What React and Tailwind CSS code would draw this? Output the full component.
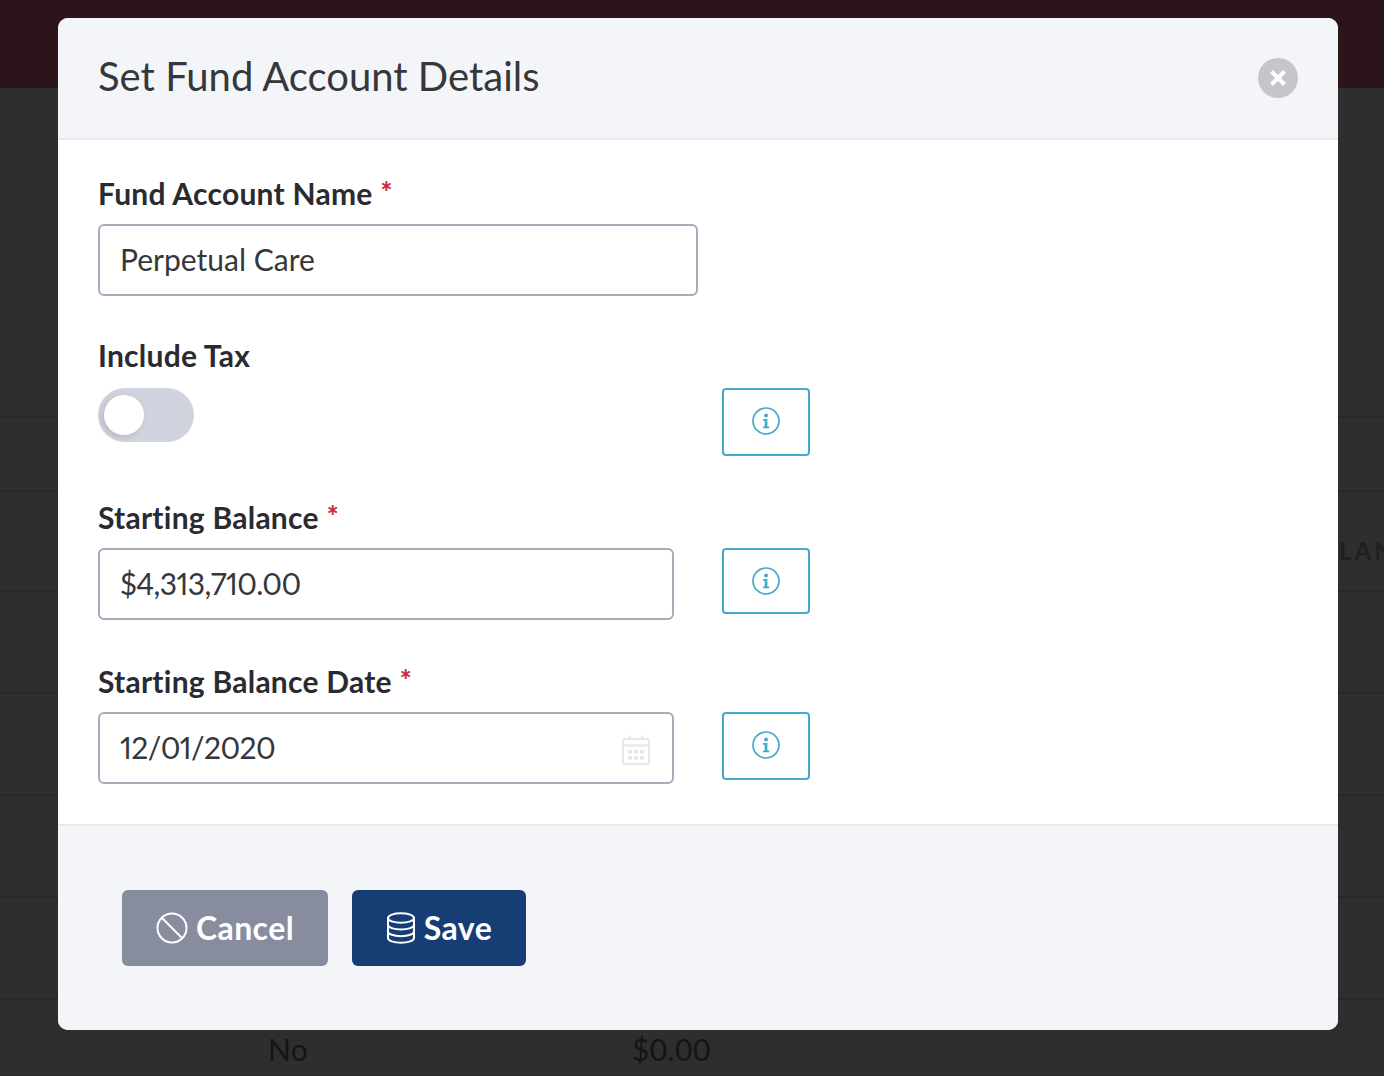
import { useState } from 'react';

const font = { fontFamily: 'Lato, sans-serif', fontVariantLigatures: 'none' };

// table rows behind the overlay, heights read off the screenshot
const backRows = ['h-[330px]', 'h-[74px]', 'h-[100px]', 'h-[102px]', 'h-[102px]', 'h-[102px]', 'h-[102px]'];

const InfoIcon = () => (
  <svg width="28" height="28" viewBox="0 0 28 28" fill="none" className="text-[#45a9c9]">
    <circle cx="14" cy="14" r="13" stroke="currentColor" strokeWidth="1.7" />
    <circle cx="14" cy="8.400" r="2" fill="currentColor" />
    <path d="M11 12h4.400v7.600h1.800v1.700H11v-1.700h1.700v-5.900H11z" fill="currentColor" />
  </svg>
);

const InfoButton = ({ height }) => (
  <button type="button" className={`w-[88px] ${height} shrink-0 border-2 border-[#45a9c9] rounded-[4px] flex items-center justify-center bg-white`}>
    <InfoIcon />
  </button>
);

const CalendarIcon = () => (
  <svg width="28" height="30" viewBox="0 0 28 30" fill="none" className="mt-[4px] text-[#e6e6ed]">
    <rect x="1" y="4" width="26" height="25" rx="2" stroke="currentColor" strokeWidth="2" />
    <path d="M1 10.500h26M7.500 0.500v4M20.500 0.500v4" stroke="currentColor" strokeWidth="2" />
    <path d="M6 15h4v3.500H6zM12 15h4v3.500h-4zM18 15h4v3.500h-4zM6 21h4v3.500H6zM12 21h4v3.500h-4zM18 21h4v3.500h-4z" fill="currentColor" />
  </svg>
);

const BanIcon = () => (
  <svg width="32" height="32" viewBox="0 0 32 32" fill="none" stroke="currentColor" strokeWidth="2">
    <circle cx="16" cy="16" r="14.500" />
    <path d="M5.800 5.800l20.400 20.400" />
  </svg>
);

const DatabaseIcon = () => (
  <svg width="30" height="32" viewBox="0 0 30 32" fill="none" stroke="currentColor" strokeWidth="2">
    <ellipse cx="15" cy="6" rx="13" ry="4.800" />
    <path d="M2 6v20c0 2.700 5.800 4.800 13 4.800s13-2.100 13-4.800V6" />
    <path d="M2 12.700c0 2.700 5.800 4.800 13 4.800s13-2.100 13-4.800" />
    <path d="M2 19.400c0 2.700 5.800 4.800 13 4.800s13-2.100 13-4.800" />
  </svg>
);

const Label = ({ children, required }) => (
  <label className="block h-9 mb-3 text-[30px] leading-[30px] font-bold tracking-[0.25px] text-[#2a2b30]">
    {children}
    {required && <span className="ml-2 text-[#d0293f] text-[28px] font-black align-[3px]">*</span>}
  </label>
);

const TextField = ({ value, width, onChange, icon, tight }) => (
  <div className={`${width} h-[72px] border-2 border-[#a9abbd] rounded-[6px] flex items-center pl-[20px] pr-[22px] bg-white`}>
    <input
      value={value}
      onChange={onChange}
      className={`flex-1 min-w-0 h-full pb-[2px] text-[30px] text-[#36373b] outline-none bg-transparent proportional-nums ${tight ? 'tracking-[-0.6px]' : ''}`}
    />
    {icon}
  </div>
);

export default function App() {
  const [name, setName] = useState('Perpetual Care');
  const [balance, setBalance] = useState('$4,313,710.00');
  const [date, setDate] = useState('12/01/2020');

  return (
    <div className="relative w-[1384px] h-[1076px] overflow-hidden bg-[#2d2e2d]" style={font}>
      <div className="h-[88px] bg-[#2b151a]" />
      {backRows.map((h, i) => (
        <div key={i} className={`${h} border-b-2 border-[#272827]`} />
      ))}
      <div className="absolute left-[268px] top-[1027px] text-[30px] tracking-[0.3px] text-[#141514]">No</div>
      <div className="absolute left-[632px] top-[1027px] text-[30px] tracking-[0.4px] text-[#141514]">$0.00</div>
      <div className="absolute left-[1339px] top-[533px] text-[24px] font-bold tracking-[3px] text-[#1e1f24]">LAN</div>

      <div className="absolute left-[58px] top-[18px] w-[1280px] h-[1012px] rounded-[10px] overflow-hidden bg-white flex flex-col">
        <div className="h-[122px] shrink-0 bg-[#f3f5f9] border-b-2 border-[#e8e9ee] flex items-center justify-between pl-10 pr-10">
          <h1 className="mb-[4px] text-[40px] font-normal text-[#36373b]">Set Fund Account Details</h1>
          <button type="button" className="w-10 h-10 rounded-full bg-[#c4c6ca] flex items-center justify-center">
            <svg width="18" height="18" viewBox="0 0 18 18" stroke="white" strokeWidth="4">
              <path d="M2.500 2.500l13 13M15.500 2.500l-13 13" />
            </svg>
          </button>
        </div>

        <div className="flex-1 pt-9 px-10 flex flex-col gap-11">
          <div>
            <Label required>Fund Account Name</Label>
            <TextField value={name} onChange={(e) => setName(e.target.value)} width="w-[600px]" />
          </div>
          <div>
            <Label>Include Tax</Label>
            <div className="flex justify-between w-[712px]">
              <button type="button" className="w-24 h-[54px] rounded-full bg-[#d1d4de] flex items-center pl-1.5">
                <span className="w-10 h-10 rounded-full bg-white shadow-[-2px_2px_6px_rgba(120,125,145,0.35)]" />
              </button>
              <InfoButton height="h-[68px] pb-0.5" />
            </div>
          </div>
          <div>
            <Label required>Starting Balance</Label>
            <div className="flex items-start gap-12">
              <TextField tight value={balance} onChange={(e) => setBalance(e.target.value)} width="w-[576px]" />
              <InfoButton height="h-[66px]" />
            </div>
          </div>
          <div>
            <Label required>Starting Balance Date</Label>
            <div className="flex items-start gap-12">
              <TextField tight value={date} onChange={(e) => setDate(e.target.value)} width="w-[576px]" icon={<CalendarIcon />} />
              <InfoButton height="h-[68px] pb-0.5" />
            </div>
          </div>
        </div>

        <div className="h-[206px] shrink-0 bg-[#f3f5f9] border-t-2 border-[#e8e9ee] pl-16 pt-16 flex items-start gap-6">
          <button type="button" className="w-[206px] h-[76px] rounded-[6px] bg-[#878c9f] text-white text-[32px] tracking-[0.4px] font-bold flex items-center justify-center gap-2">
            <BanIcon />
            Cancel
          </button>
          <button type="button" className="w-[174px] h-[76px] rounded-[6px] bg-[#163e75] text-white text-[32px] tracking-[0.4px] font-bold flex items-center justify-center gap-2">
            <DatabaseIcon />
            Save
          </button>
        </div>
      </div>
    </div>
  );
}
